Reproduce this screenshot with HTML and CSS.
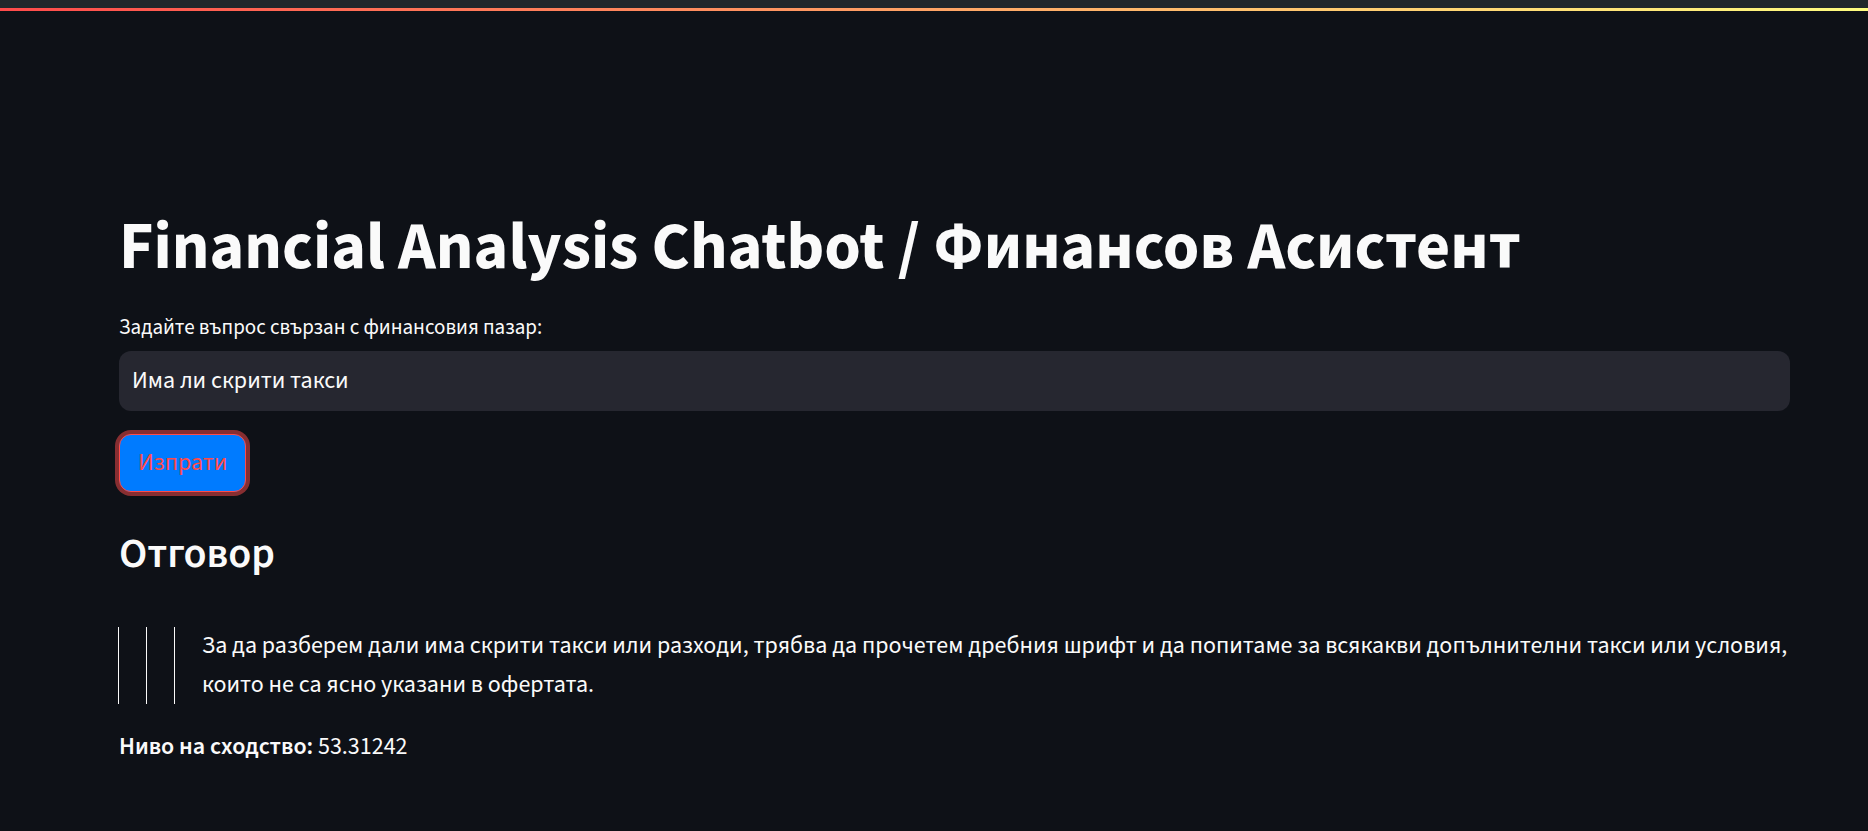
FILE: index.html
```html
<!DOCTYPE html>
<html lang="en">
<head>
<meta charset="utf-8">
<title>Financial Analysis Chatbot</title>
<link rel="stylesheet" href="styles.css">
</head>
<body>
<div class="chrome"></div>
<div class="decoration"></div>
<main class="main">
  <h1 class="title">Financial Analysis Chatbot / Финансов Асистент</h1>
  <label class="label" for="q">Задайте въпрос свързан с финансовия пазар:</label>
  <div class="input-wrap">
    <input id="q" class="input" type="text" value="Има ли скрити такси">
  </div>
  <div class="btn-row">
    <button class="btn" type="button">Изпрати</button>
  </div>
  <h3 class="subheader">Отговор</h3>
  <blockquote class="quote">
    <blockquote class="quote">
      <blockquote class="quote">
        <p class="quote-text">За да разберем дали има скрити такси или разходи, трябва да прочетем дребния шрифт и да попитаме за всякакви допълнителни такси или условия, които не са ясно указани в офертата.</p>
      </blockquote>
    </blockquote>
  </blockquote>
  <p class="score"><strong>Ниво на сходство:</strong> 53.31242</p>
</main>
</body>
</html>
```
FILE: styles.css
```css
html, body {
  margin: 0;
  padding: 0;
  background: #0e1117;
}
body {
  font-family: "Source Sans 3", "Noto Sans", sans-serif;
  font-size: 24px;
  line-height: 1.6;
  color: #fafafa;
  overflow: hidden;
}
.chrome {
  height: 8px;
  background: #22272b;
}
.decoration {
  height: 3px;
  background: linear-gradient(90deg, #ff4b4b, #fffd80);
}
.main {
  padding: 0 78px 0 119px;
}
.title {
  margin: 197px 0 0;
  font-size: 66px;
  font-weight: 700;
  line-height: 1.2;
  color: #fafafa;
}
.label {
  display: block;
  margin-top: 24px;
  font-size: 21px;
  line-height: 1.6;
  color: #fafafa;
}
.input-wrap {
  margin-top: 6px;
  height: 60px;
  background: #262730;
  border-radius: 12px;
  display: flex;
  align-items: center;
}
.input {
  flex: 1;
  border: 0;
  outline: 0;
  background: transparent;
  color: #fafafa;
  font-family: inherit;
  font-size: 24px;
  line-height: 1.424;
  padding: 0 13px;
}
.btn-row {
  margin-top: 23px;
  display: flex;
}
.btn {
  height: 58px;
  padding: 0 18px;
  border: 1px solid #ff4b4b;
  border-radius: 12px;
  background: #007bff;
  color: #ff4b4b;
  font-family: inherit;
  font-size: 24px;
  line-height: 1.424;
  box-shadow: 0 0 0 4px rgba(255, 75, 75, 0.5);
  cursor: pointer;
}
.subheader {
  margin: 37px 0 0;
  font-size: 42px;
  font-weight: 600;
  line-height: 1.2;
}
.quote {
  margin: 0 0 0 -1px;
  padding: 0 0 0 27px;
  border-left: 1px solid #fafafa;
}
.main > .quote {
  margin-top: 48px;
}
.quote .quote {
  margin-left: 0;
}
.quote-text {
  margin: 0;
}
.score {
  margin: 24px 0 0;
}
.score strong {
  font-weight: 600;
}
```
